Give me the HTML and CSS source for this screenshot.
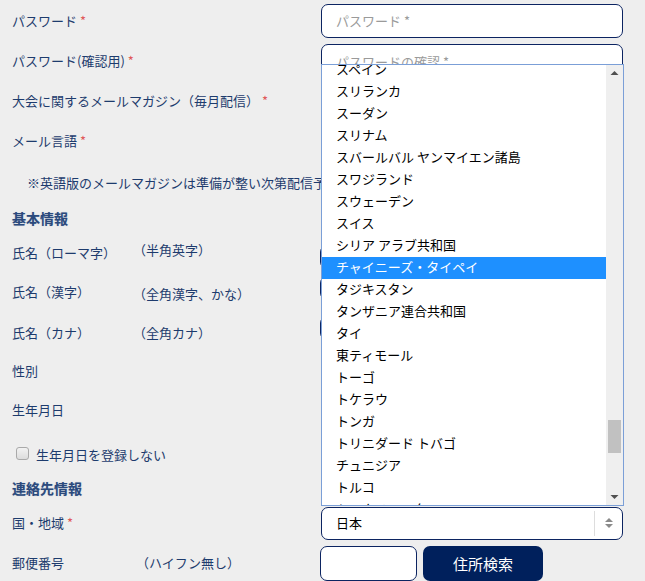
FILE: index.html
```html
<!DOCTYPE html>
<html lang="ja">
<head>
<meta charset="utf-8">
<title>会員登録</title>
<link rel="stylesheet" href="styles.css">
</head>
<body>
<form class="form">
  <div class="row row-pass">
    <div class="label">パスワード <span class="req">*</span></div>
    <div class="field"><input class="input" type="password" placeholder="パスワード *"></div>
  </div>
  <div class="row row-std">
    <div class="label">パスワード(確認用) <span class="req">*</span></div>
    <div class="field"><input class="input" type="password" placeholder="パスワードの確認 *"></div>
  </div>
  <div class="row row-std">
    <div class="label">大会に関するメールマガジン（毎月配信） <span class="req">*</span></div>
    <div class="field"></div>
  </div>
  <div class="row row-std">
    <div class="label">メール言語 <span class="req">*</span></div>
    <div class="field"></div>
  </div>
  <div class="row row-note">
    <div class="note-line">※英語版のメールマガジンは準備が整い次第配信予定です。</div>
  </div>
  <div class="row row-heading">
    <h2 class="heading">基本情報</h2>
  </div>
  <div class="row row-roman">
    <div class="label label-split"><span class="label-main">氏名（ローマ字）</span><span class="hint hint-up">（半角英字）</span></div>
    <div class="field"><input class="input input-small" type="text"></div>
  </div>
  <div class="row row-kanji">
    <div class="label label-split"><span class="label-main">氏名（漢字）</span><span class="hint hint-down">（全角漢字、かな）</span></div>
    <div class="field"><input class="input input-small" type="text"></div>
  </div>
  <div class="row row-kana">
    <div class="label label-split"><span class="label-main">氏名（カナ）</span><span class="hint">（全角カナ）</span></div>
    <div class="field"><input class="input input-small" type="text"></div>
  </div>
  <div class="row row-gender">
    <div class="label">性別</div>
    <div class="field"></div>
  </div>
  <div class="row row-birth">
    <div class="label">生年月日</div>
    <div class="field"></div>
  </div>
  <div class="row row-check">
    <label class="check"><span class="check-box"></span>生年月日を登録しない</label>
  </div>
  <div class="row row-heading2">
    <h2 class="heading">連絡先情報</h2>
  </div>
  <div class="row row-country">
    <div class="label">国・地域 <span class="req">*</span></div>
    <div class="field">
      <div class="select">
        <span class="select-value">日本</span>
        <span class="select-sep"></span>
        <span class="select-arrows">
          <svg width="12" height="14" viewBox="0 0 12 14"><polygon points="2,6 10,6 6,2" fill="#8a8a8a"/><polygon points="2,8 10,8 6,12" fill="#8a8a8a"/></svg>
        </span>
      </div>
    </div>
  </div>
  <div class="row row-postal">
    <div class="label label-split"><span class="label-main label-postal">郵便番号</span><span class="hint">（ハイフン無し）</span></div>
    <div class="field field-postal">
      <input class="input input-postal" type="text">
      <button class="btn" type="button">住所検索</button>
    </div>
  </div>
</form>

<div class="dropdown">
  <ul class="options">
    <li class="opt">スペイン</li>
    <li class="opt">スリランカ</li>
    <li class="opt">スーダン</li>
    <li class="opt">スリナム</li>
    <li class="opt">スバールバル ヤンマイエン諸島</li>
    <li class="opt">スワジランド</li>
    <li class="opt">スウェーデン</li>
    <li class="opt">スイス</li>
    <li class="opt">シリア アラブ共和国</li>
    <li class="opt selected">チャイニーズ・タイペイ</li>
    <li class="opt">タジキスタン</li>
    <li class="opt">タンザニア連合共和国</li>
    <li class="opt">タイ</li>
    <li class="opt">東ティモール</li>
    <li class="opt">トーゴ</li>
    <li class="opt">トケラウ</li>
    <li class="opt">トンガ</li>
    <li class="opt">トリニダード トバゴ</li>
    <li class="opt">チュニジア</li>
    <li class="opt">トルコ</li>
    <li class="opt">トルクメニスタン</li>
  </ul>
  <div class="scrollbar">
    <div class="sb-btn"><svg width="17" height="17" viewBox="0 0 17 17"><polygon points="4.5,10 12.5,10 8.5,6" fill="#505050"/></svg></div>
    <div class="sb-track"><div class="sb-thumb"></div></div>
    <div class="sb-btn"><svg width="17" height="17" viewBox="0 0 17 17"><polygon points="4.5,7 12.5,7 8.5,11" fill="#505050"/></svg></div>
  </div>
</div>
</body>
</html>
```
FILE: styles.css
```css
html, body {
  margin: 0;
  padding: 0;
  background: #eeeeee;
}
body {
  width: 645px;
  height: 581px;
  overflow: hidden;
  position: relative;
  font-family: "Noto Sans CJK JP", "Noto Sans", sans-serif;
  font-size: 13px;
  line-height: 20px;
  color: #1d3b6d;
}
.form {
  margin: 0;
  padding-left: 12px;
}
.row {
  display: grid;
  grid-template-columns: 309px 302px;
  align-items: center;
}
.row-pass { height: 41px; }
.row-std { height: 40px; }
.row-note { height: 44px; display: flex; }
.row-heading { height: 26px; display: flex; }
.row-roman { height: 44px; }
.row-kanji { height: 34px; }
.row-kana { height: 48px; }
.row-gender { height: 28px; }
.row-birth { height: 50px; }
.row-check { height: 36px; display: flex; }
.row-heading2 { height: 34px; display: flex; }
.row-country { height: 36px; }
.row-postal { height: 44px; }

.label {
  white-space: nowrap;
}
.req {
  color: #e05858;
}
.label-split {
  display: flex;
  align-items: center;
}
.label-main {
  width: 121px;
  flex: none;
}
.label-postal {
  width: 124px;
}
.hint {
  white-space: nowrap;
}
.hint-up { margin-top: -6px; }
.hint-down { margin-top: 4px; }

.note-line {
  padding-left: 15px;
  white-space: nowrap;
}
.heading {
  margin: 0;
  font-size: 14px;
  font-weight: bold;
  line-height: 20px;
  color: #2b4a7d;
  text-shadow: 0 0 1px rgba(60, 90, 140, 0.35);
}

.field {
  height: 100%;
  display: flex;
  align-items: center;
}
.input {
  box-sizing: border-box;
  width: 302px;
  height: 34px;
  margin: 0;
  border: 1px solid #0c2461;
  border-radius: 7px;
  background: #fff;
  padding: 0 14px;
  font-family: inherit;
  font-size: 13px;
  color: #000;
  outline: none;
}
.input::placeholder {
  color: #9a9a9a;
}
.input-small {
  height: 24px;
  margin-left: -1px;
  align-self: flex-start;
}
.row-roman .input-small { margin-top: 14px; }
.row-kanji .input-small { margin-top: 1px; }
.row-kana .input-small { margin-top: 7px; }

.check {
  display: flex;
  align-items: center;
  padding-left: 4px;
  margin-top: 3px;
}
.check-box {
  box-sizing: border-box;
  width: 13px;
  height: 13px;
  margin-right: 7px;
  border: 1px solid #a9a9a9;
  border-radius: 3px;
  background: linear-gradient(#f2f2f2, #dcdcdc);
  margin-top: -3px;
}

.select {
  box-sizing: border-box;
  width: 302px;
  height: 33px;
  border: 1px solid #0c2461;
  border-radius: 7px;
  background: #fff;
  display: flex;
  align-items: center;
  padding-left: 14px;
  color: #000;
}
.select-value {
  flex: 1;
}
.select-sep {
  width: 1px;
  height: 25px;
  background: #dddddd;
}
.select-arrows {
  width: 27px;
  display: flex;
  justify-content: center;
  align-items: center;
}

.field-postal {
  gap: 6px;
}
.input-postal {
  width: 97px;
  height: 35px;
  margin-left: -1px;
}
.btn {
  width: 120px;
  height: 35px;
  border: none;
  border-radius: 7px;
  background: #00205c;
  color: #fff;
  font-family: inherit;
  font-size: 15px;
  padding: 0;
}

.dropdown {
  position: absolute;
  left: 321px;
  top: 64px;
  width: 303px;
  height: 442px;
  box-sizing: border-box;
  border: 1px solid #7b9fd7;
  background: #fff;
  display: flex;
  overflow: hidden;
}
.options {
  flex: 1;
  margin: -6px 0 0 0;
  padding: 0;
  list-style: none;
}
.opt {
  height: 22px;
  line-height: 20px;
  padding-left: 14px;
  color: #000;
  font-size: 13px;
  white-space: nowrap;
}
.opt.selected {
  background: #1e90ff;
  color: #fff;
}
.scrollbar {
  width: 17px;
  background: #efefef;
  display: flex;
  flex-direction: column;
}
.sb-btn {
  height: 17px;
}
.sb-btn svg {
  display: block;
}
.sb-track {
  flex: 1;
}
.sb-thumb {
  width: 13px;
  height: 33px;
  margin: 338px 0 0 2px;
  background: #c1c1c1;
}
```
